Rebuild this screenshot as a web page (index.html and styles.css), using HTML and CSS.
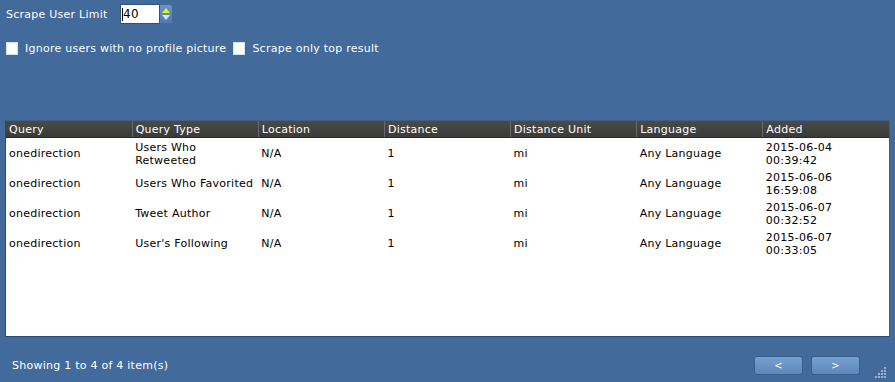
FILE: index.html
```html
<!DOCTYPE html>
<html lang="en">
<head>
  <meta charset="UTF-8" />
  <title>Scrape Queries</title>
  <link rel="stylesheet" href="styles.css">
</head>
<body>
<div class="top">
  <span class="label">Scrape User Limit</span>
  <div class="spin">
    <div class="spin-field"><span class="caret"></span>40</div>
    <div class="spin-btns">
      <svg width="12" height="18" viewBox="0 0 12 18">
        <polygon points="2,8 10,8 6,3" fill="#e8f018"/>
        <polygon points="2,10 10,10 6,15" fill="#d8e6f4"/>
      </svg>
    </div>
  </div>
</div>
<div class="options">
  <label class="check"><span class="box"></span>Ignore users with no profile picture</label>
  <label class="check"><span class="box"></span>Scrape only top result</label>
</div>
<div class="grid">
  <table>
    <thead>
      <tr>
        <th>Query</th><th>Query Type</th><th>Location</th><th>Distance</th><th>Distance Unit</th><th>Language</th><th>Added</th>
      </tr>
    </thead>
    <tbody>
      <tr>
        <td>onedirection</td><td>Users Who<br>Retweeted</td><td>N/A</td><td>1</td><td>mi</td><td>Any Language</td><td>2015-06-04<br>00:39:42</td>
      </tr>
      <tr>
        <td>onedirection</td><td>Users Who Favorited</td><td>N/A</td><td>1</td><td>mi</td><td>Any Language</td><td>2015-06-06<br>16:59:08</td>
      </tr>
      <tr>
        <td>onedirection</td><td>Tweet Author</td><td>N/A</td><td>1</td><td>mi</td><td>Any Language</td><td>2015-06-07<br>00:32:52</td>
      </tr>
      <tr>
        <td>onedirection</td><td>User's Following</td><td>N/A</td><td>1</td><td>mi</td><td>Any Language</td><td>2015-06-07<br>00:33:05</td>
      </tr>
    </tbody>
  </table>
</div>
<div class="footer">
  <span class="status">Showing 1 to 4 of 4 item(s)</span>
  <div class="pager">
    <button class="page-btn">&lt;</button>
    <button class="page-btn">&gt;</button>
  </div>
  <svg class="grip" width="14" height="14" viewBox="0 0 14 14">
    <g fill="#9db3cf">
      <rect x="11" y="2" width="2" height="2"/>
      <rect x="8" y="5" width="2" height="2"/><rect x="11" y="5" width="2" height="2"/>
      <rect x="5" y="8" width="2" height="2"/><rect x="8" y="8" width="2" height="2"/><rect x="11" y="8" width="2" height="2"/>
      <rect x="2" y="11" width="2" height="2"/><rect x="5" y="11" width="2" height="2"/><rect x="8" y="11" width="2" height="2"/><rect x="11" y="11" width="2" height="2"/>
    </g>
  </svg>
</div>
</body>
</html>
```

FILE: styles.css
```css
body {
    margin: 0;
    background: #426a9b;
    font-family: "DejaVu Sans", Verdana, sans-serif;
    font-size: 11px;
    letter-spacing: 0.25px;
    color: #fff;
    width: 895px;
    height: 382px;
    overflow: hidden;
}
.top {
    display: flex;
    align-items: center;
    padding: 4px 0 0 6px;
    height: 20px;
}
.label {
    width: 114px;
}
.spin {
    display: flex;
    align-items: center;
}
.spin-field {
    box-sizing: border-box;
    width: 40px;
    height: 20px;
    background: #fff;
    border: 1px solid #2f527c;
    color: #000;
    display: flex;
    align-items: center;
    padding-left: 1px;
    font-size: 12px;
}
.caret {
    display: inline-block;
    width: 1px;
    height: 13px;
    background: #000;
}
.spin-btns {
    width: 12px;
    height: 18px;
    background: linear-gradient(#6b95c6, #4f7bb0);
    border-radius: 0 2px 2px 0;
}
.spin-btns svg {
    display: block;
}
.options {
    display: flex;
    align-items: center;
    gap: 7px;
    margin-top: 18px;
    padding-left: 6px;
    height: 12px;
}
.check {
    display: flex;
    align-items: center;
    gap: 7px;
}
.box {
    box-sizing: border-box;
    width: 12px;
    height: 13px;
    background: #fff;
    border: 1px solid #d7e0ea;
}
.grid {
    margin: 66px 0 0 5px;
    width: 885px;
    height: 217px;
    box-sizing: border-box;
    background: #fff;
    border: 1px solid #2b4a70;
    border-top-color: #3d5f88;
    border-right-color: #3d5f88;
}
table {
    width: 100%;
    table-layout: fixed;
    border-collapse: collapse;
    color: #000;
}
th {
    height: 15px;
    padding: 1px 0 0 3px;
    text-align: left;
    font-weight: normal;
    color: #fff;
    background: linear-gradient(#4a4a48, #3a3a38);
    border-left: 1px solid #6a6a66;
    border-bottom: 1px solid #2a2a28;
    white-space: nowrap;
}
th:first-child {
    border-left: none;
}
td {
    height: 29px;
    padding: 1px 0 0 3px;
    line-height: 13px;
    white-space: nowrap;
    vertical-align: middle;
}
.footer {
    display: flex;
    align-items: center;
    height: 19px;
    margin-top: 19px;
    padding-left: 12px;
}
.status {
    flex: 1;
}
.pager {
    display: flex;
    gap: 8px;
}
.page-btn {
    width: 49px;
    height: 19px;
    padding: 0;
    border: 1px solid #3b5e8a;
    border-radius: 3px;
    background: linear-gradient(#77a0cf, #5d88bb);
    color: #fff;
    font-family: "DejaVu Sans", sans-serif;
    font-size: 10px;
}
.grip {
    margin: 12px 8px 0 13px;
}
```
